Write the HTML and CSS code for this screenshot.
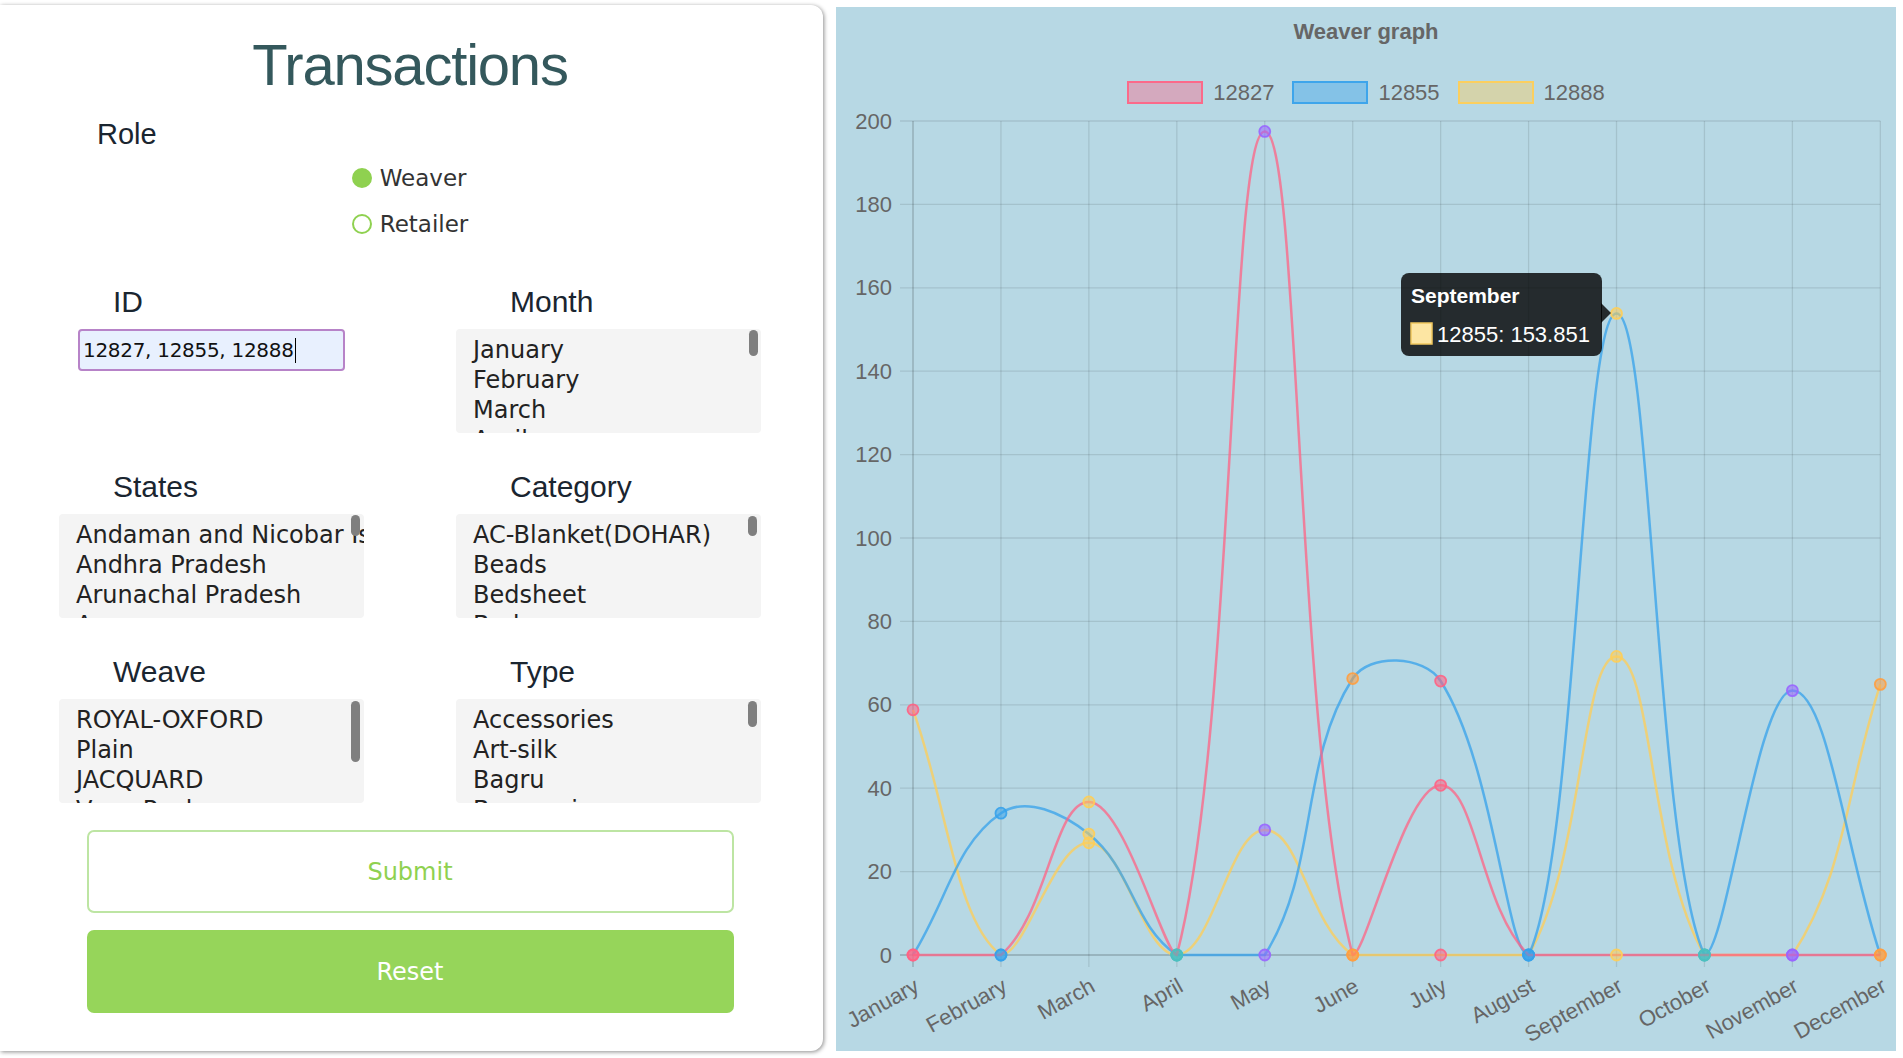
FILE: index.html
```html
<!DOCTYPE html>
<html lang="en">
<head>
<meta charset="utf-8">
<title>Transactions</title>
<link rel="stylesheet" href="styles.css">
</head>
<body>
<main class="page">
  <section class="card">
    <h1 class="title">Transactions</h1>
    <div class="role-label">Role</div>
    <div class="radios">
      <div class="radio"><span class="dot on"></span><span>Weaver</span></div>
      <div class="radio"><span class="dot"></span><span>Retailer</span></div>
    </div>
    <div class="fields">
      <div class="field">
        <div class="flabel">ID</div>
        <div class="idinput"><span>12827, 12855, 12888</span><span class="caret"></span></div>
      </div>
      <div class="field">
        <div class="flabel">Month</div>
        <div class="list">
          <div>January</div><div>February</div><div>March</div><div>April</div>
          <span class="thumb t-month"></span>
        </div>
      </div>
      <div class="field">
        <div class="flabel">States</div>
        <div class="list">
          <div>Andaman and Nicobar Islands</div><div>Andhra Pradesh</div><div>Arunachal Pradesh</div><div>Assam</div>
          <span class="thumb t-states"></span>
        </div>
      </div>
      <div class="field">
        <div class="flabel">Category</div>
        <div class="list">
          <div>AC-Blanket(DOHAR)</div><div>Beads</div><div>Bedsheet</div><div>Bedcover</div>
          <span class="thumb t-cat"></span>
        </div>
      </div>
      <div class="field">
        <div class="flabel">Weave</div>
        <div class="list">
          <div>ROYAL-OXFORD</div><div>Plain</div><div>JACQUARD</div><div>Vana Resham</div>
          <span class="thumb t-weave"></span>
        </div>
      </div>
      <div class="field">
        <div class="flabel">Type</div>
        <div class="list">
          <div>Accessories</div><div>Art-silk</div><div>Bagru</div><div>Banarasi</div>
          <span class="thumb t-type"></span>
        </div>
      </div>
    </div>
    <div class="buttons">
      <div class="btn submit">Submit</div>
      <div class="btn reset">Reset</div>
    </div>
  </section>
  <section class="chart">
    <div class="ctitle">Weaver graph</div>
    <div class="legend">
      <div class="litem"><span class="lbox red"></span><span>12827</span></div>
      <div class="litem"><span class="lbox blue"></span><span>12855</span></div>
      <div class="litem"><span class="lbox yellow"></span><span>12888</span></div>
    </div>
    <svg id="plot" class="plot" width="1060" height="944" viewBox="0 0 1060 944"></svg>
  </section>
</main>
<script src="script.js"></script>
</body>
</html>
```

FILE: styles.css
```css
* { box-sizing: border-box; }
html, body { margin: 0; padding: 0; background: #fff; }
.page {
  display: flex;
  align-items: flex-start;
  width: 1903px;
  height: 1058px;
  overflow: hidden;
}
.card {
  width: 823px;
  height: 1046px;
  margin-top: 5px;
  background: #fff;
  border-radius: 0 12px 12px 0;
  box-shadow: 1px 1px 4px rgba(0, 0, 0, 0.45);
  padding: 28px 62px 0 59px;
  font-family: "Liberation Sans", Arial, sans-serif;
  display: flex;
  flex-direction: column;
}
.title {
  margin: 0;
  font-weight: 400;
  font-size: 58px;
  line-height: 64px;
  letter-spacing: -1.2px;
  text-align: center;
  color: #34585c;
}
.role-label {
  margin: 20px 0 0 38px;
  font-size: 29px;
  line-height: 34px;
  color: #1a2530;
}
.radios {
  align-self: center;
  display: flex;
  flex-direction: column;
  margin-top: 4px;
  font-family: "DejaVu Sans", sans-serif;
  font-size: 23px;
  color: #333;
}
.radio {
  height: 46px;
  display: flex;
  align-items: center;
  gap: 8px;
}
.dot {
  width: 20px;
  height: 20px;
  border-radius: 50%;
  border: 2.5px solid #8fd150;
}
.dot.on { background: #8fd150; }
.fields {
  margin-top: 38px;
  display: grid;
  grid-template-columns: 305px 305px;
  column-gap: 92px;
  row-gap: 37px;
}
.flabel {
  font-size: 30px;
  line-height: 34px;
  padding-left: 54px;
  color: #1a2530;
  margin-bottom: 10px;
}
.idinput {
  width: 267px;
  height: 42px;
  margin: 1px auto 0;
  border: 2px solid #b783c8;
  border-radius: 4px;
  background: #e8f0fe;
  padding-left: 3px;
  display: flex;
  align-items: center;
  font-family: "DejaVu Sans", sans-serif;
  font-size: 20px;
  letter-spacing: -0.3px;
  color: #111;
}
.caret {
  display: inline-block;
  width: 1.5px;
  height: 25px;
  background: #000;
  margin-left: 1px;
}
.list {
  position: relative;
  height: 104px;
  background: #f4f4f4;
  border-radius: 4px;
  overflow: hidden;
  padding: 6px 0 0 17px;
  font-family: "DejaVu Sans", sans-serif;
  font-size: 24px;
  line-height: 30px;
  color: #222;
  white-space: nowrap;
}
.thumb {
  position: absolute;
  right: 4px;
  top: 2px;
  width: 9px;
  border-radius: 5px;
  background: #7f7f7f;
}
.t-month { right: 3px; top: 1px; height: 26px; }
.t-states { top: 1px; height: 21px; }
.t-cat { height: 20px; }
.t-weave { height: 61px; }
.t-type { height: 26px; }
.buttons {
  margin-top: 27px;
  display: flex;
  flex-direction: column;
  align-items: center;
  gap: 17px;
}
.btn {
  width: 647px;
  height: 83px;
  border-radius: 7px;
  display: flex;
  align-items: center;
  justify-content: center;
  font-family: "DejaVu Sans", sans-serif;
  font-size: 24px;
}
.submit {
  border: 2px solid #bde5a3;
  color: #8fd150;
  background: #fff;
}
.reset {
  background: #96d55a;
  color: #fff;
}
.chart {
  width: 1060px;
  height: 1044px;
  margin: 7px 0 0 13px;
  background: #b7d8e4;
  font-family: "Liberation Sans", Arial, sans-serif;
  color: #666;
  display: flex;
  flex-direction: column;
}
.ctitle {
  margin-top: 12px;
  height: 26px;
  line-height: 26px;
  text-align: center;
  font-weight: 700;
  font-size: 22px;
}
.legend {
  margin-top: 36px;
  height: 23px;
  display: flex;
  justify-content: center;
  gap: 18px;
}
.litem {
  display: flex;
  align-items: center;
  gap: 10px;
  font-size: 22px;
  line-height: 23px;
}
.lbox {
  width: 76px;
  height: 23px;
  border: 2px solid;
}
.lbox.red { background: rgba(255, 99, 132, 0.4); border-color: rgba(255, 99, 132, 0.9); }
.lbox.blue { background: rgba(54, 162, 235, 0.4); border-color: rgba(54, 162, 235, 0.9); }
.lbox.yellow { background: rgba(255, 206, 86, 0.4); border-color: rgba(255, 206, 86, 0.9); }
.plot {
  display: block;
  margin-top: 3px;
  overflow: visible;
}
.tick {
  font-family: "Liberation Sans", Arial, sans-serif;
  font-size: 22px;
  fill: #666;
}
.tip-title {
  font-family: "Liberation Sans", Arial, sans-serif;
  font-size: 21px;
  font-weight: 700;
  fill: #fff;
}
.tip-body {
  font-family: "Liberation Sans", Arial, sans-serif;
  font-size: 22px;
  fill: #fff;
}
```

FILE: script.js
```js
(function () {
  var NS = 'http://www.w3.org/2000/svg';
  var svg = document.getElementById('plot');
  function el(name, attrs, text) {
    var e = document.createElementNS(NS, name);
    for (var k in attrs) e.setAttribute(k, attrs[k]);
    if (text !== undefined) e.textContent = text;
    svg.appendChild(e);
    return e;
  }
  var months = ['January', 'February', 'March', 'April', 'May', 'June', 'July', 'August', 'September', 'October', 'November', 'December'];
  var X0 = 77, DX = 87.94, Y0 = 848, K = 4.17;
  var TOP = Y0 - 200 * K, XR = X0 + 11 * DX;

  for (var v = 0; v <= 200; v += 20) {
    var y = Y0 - v * K;
    el('line', { x1: 64, x2: XR, y1: y, y2: y, stroke: v === 0 ? 'rgba(0,0,0,0.22)' : 'rgba(0,0,0,0.1)', 'stroke-width': 1.3 });
    el('text', { x: 56, y: y, 'text-anchor': 'end', 'dominant-baseline': 'central', 'class': 'tick' }, String(v));
  }
  for (var i = 0; i < 12; i++) {
    var x = X0 + i * DX;
    el('line', { x1: x, x2: x, y1: TOP, y2: Y0 + 12, stroke: i === 0 ? 'rgba(0,0,0,0.22)' : 'rgba(0,0,0,0.1)', 'stroke-width': 1.3 });
    var ax = x + 4, ay = 877;
    el('text', { x: ax, y: ay, 'text-anchor': 'end', 'dominant-baseline': 'central', transform: 'rotate(-29 ' + ax + ' ' + ay + ')', 'class': 'tick' }, months[i]);
  }

  var pointColors = ['255,99,132', '54,162,235', '255,206,86', '75,192,192', '153,102,255', '255,159,64'];
  var sets = [
    { c: '255,99,132', v: [0, 0, 36.7, 0, 197.5, 0, 40.7, 0, 0, 0, 0, 0] },
    { c: '54,162,235', v: [0, 34, 29, 0, 0, 66.3, 65.7, 0, 153.851, 0, 63.4, 0] },
    { c: '255,206,86', v: [58.8, 0, 26.9, 0, 30, 0, 0, 0, 71.6, 0, 0, 64.9] }
  ];
  function clamp(a, lo, hi) { return Math.max(lo, Math.min(hi, a)); }
  function pathFor(vals) {
    var pts = vals.map(function (val, j) { return { x: X0 + j * DX, y: Y0 - val * K }; });
    pts.forEach(function (p, j) {
      var prev = pts[j - 1] || p, next = pts[j + 1] || p;
      var d01 = Math.hypot(p.x - prev.x, p.y - prev.y);
      var d12 = Math.hypot(next.x - p.x, next.y - p.y);
      var s01 = d01 / (d01 + d12), s12 = d12 / (d01 + d12);
      if (isNaN(s01)) s01 = 0;
      if (isNaN(s12)) s12 = 0;
      var fa = 0.4 * s01, fb = 0.4 * s12;
      p.px = clamp(p.x - fa * (next.x - prev.x), X0, XR);
      p.py = clamp(p.y - fa * (next.y - prev.y), TOP, Y0);
      p.nx = clamp(p.x + fb * (next.x - prev.x), X0, XR);
      p.ny = clamp(p.y + fb * (next.y - prev.y), TOP, Y0);
    });
    var d = 'M' + pts[0].x + ' ' + pts[0].y;
    for (var j = 1; j < pts.length; j++) {
      d += ' C' + pts[j - 1].nx + ' ' + pts[j - 1].ny + ' ' + pts[j].px + ' ' + pts[j].py + ' ' + pts[j].x + ' ' + pts[j].y;
    }
    return { d: d, pts: pts };
  }
  for (var s = sets.length - 1; s >= 0; s--) {
    var r = pathFor(sets[s].v);
    el('path', { d: r.d, fill: 'none', stroke: 'rgba(' + sets[s].c + ',0.75)', 'stroke-width': 2.5 });
    r.pts.forEach(function (p, j) {
      var pc = pointColors[j % 6];
      el('circle', { cx: p.x, cy: p.y, r: 5.5, fill: 'rgba(' + pc + ',0.55)', stroke: 'rgba(' + pc + ',0.9)', 'stroke-width': 1.8 });
    });
  }

  el('rect', { x: 565, y: 166, width: 201, height: 83, rx: 8, fill: 'rgba(0,0,0,0.8)' });
  el('polygon', { points: '765,196 775,206 765,216', fill: 'rgba(0,0,0,0.8)' });
  el('text', { x: 575, y: 196, 'class': 'tip-title' }, 'September');
  el('rect', { x: 575, y: 216, width: 21, height: 21, fill: '#fde6a3', stroke: '#f0c75e', 'stroke-width': 1.5 });
  el('text', { x: 601, y: 235, 'class': 'tip-body' }, '12855: 153.851');
})();
```
